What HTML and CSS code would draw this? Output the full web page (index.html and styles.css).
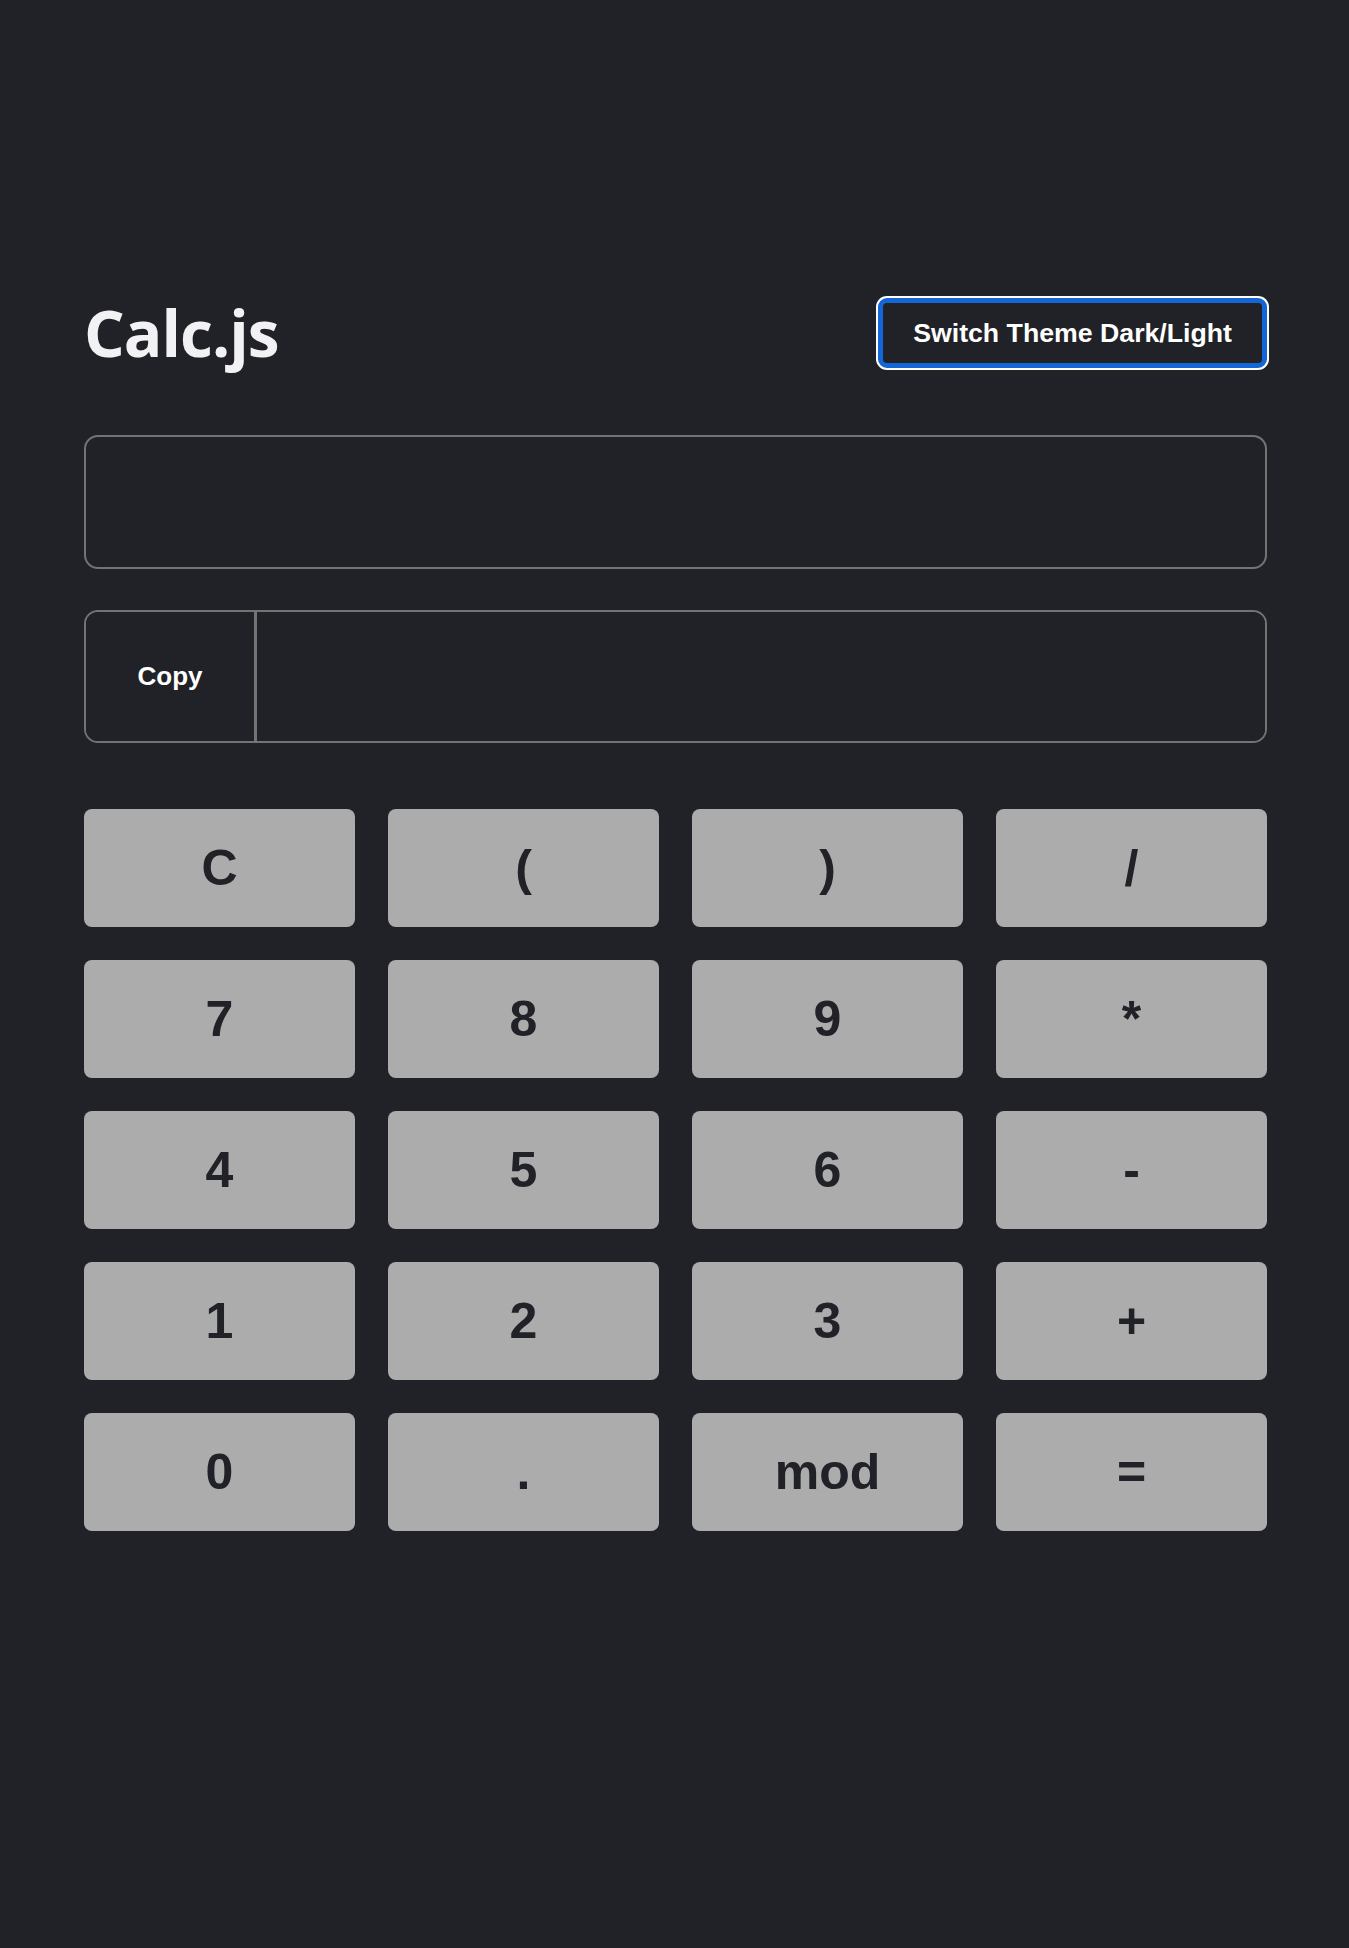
FILE: index.html
```html
<!DOCTYPE html>
<html lang="en">
<head>
<meta charset="utf-8">
<title>Calc.js</title>
<link rel="stylesheet" href="styles.css">
</head>
<body>
<div class="container">
  <header class="header">
    <h1 class="title">Calc.js</h1>
    <button class="theme-btn" type="button">Switch Theme Dark/Light</button>
  </header>
  <input class="expr" type="text">
  <div class="result-group">
    <button class="copy-btn" type="button">Copy</button>
    <input class="result" type="text">
  </div>
  <div class="keys">
    <button class="key">C</button>
    <button class="key">(</button>
    <button class="key">)</button>
    <button class="key">/</button>
    <button class="key">7</button>
    <button class="key">8</button>
    <button class="key">9</button>
    <button class="key">*</button>
    <button class="key">4</button>
    <button class="key">5</button>
    <button class="key">6</button>
    <button class="key">-</button>
    <button class="key">1</button>
    <button class="key">2</button>
    <button class="key">3</button>
    <button class="key">+</button>
    <button class="key">0</button>
    <button class="key">.</button>
    <button class="key">mod</button>
    <button class="key">=</button>
  </div>
</div>
</body>
</html>
```

FILE: styles.css
```css
html, body {
  margin: 0;
  padding: 0;
  background: #212227;
}
body {
  min-height: 1948px;
  font-family: "Liberation Sans", Arial, sans-serif;
}
.container {
  width: 1183px;
  margin-left: 84px;
  padding-top: 298px;
}
.header {
  display: flex;
  justify-content: space-between;
  align-items: center;
  height: 70px;
}
.title {
  margin: 0;
  font-family: "Open Sans", "Noto Sans", sans-serif;
  font-weight: 700;
  font-size: 64px;
  line-height: 70px;
  color: #f2f2f4;
  letter-spacing: -1px;
}
.theme-btn {
  box-sizing: border-box;
  height: 70px;
  padding: 0 30px;
  background: #212227;
  color: #ffffff;
  font-family: "Liberation Sans", Arial, sans-serif;
  font-weight: 700;
  font-size: 26.7px;
  border: 5px solid #1466d6;
  border-radius: 9px;
  box-shadow: 0 0 0 2px #ffffff;
}
.expr {
  display: block;
  box-sizing: border-box;
  width: 100%;
  height: 134px;
  margin: 67px 0 0;
  border: 2px solid #737373;
  border-radius: 14px;
  background: #212227;
  outline: none;
}
.result-group {
  display: flex;
  box-sizing: border-box;
  height: 133px;
  margin-top: 41px;
  border: 2px solid #737373;
  border-radius: 14px;
  overflow: hidden;
}
.copy-btn {
  box-sizing: border-box;
  width: 171px;
  height: 100%;
  background: #212227;
  color: #ffffff;
  font-family: "Liberation Sans", Arial, sans-serif;
  font-weight: 700;
  font-size: 26px;
  border: none;
  border-right: 3px solid #737373;
  padding: 0;
}
.result {
  flex: 1;
  border: none;
  background: #212227;
  outline: none;
}
.keys {
  display: grid;
  grid-template-columns: repeat(4, 1fr);
  grid-auto-rows: 118px;
  column-gap: 33px;
  row-gap: 33px;
  margin-top: 66px;
}
.key {
  background: #acacac;
  color: #212227;
  border: none;
  border-radius: 8px;
  font-family: "Liberation Sans", Arial, sans-serif;
  font-weight: 700;
  font-size: 50px;
  padding: 0;
}
```
